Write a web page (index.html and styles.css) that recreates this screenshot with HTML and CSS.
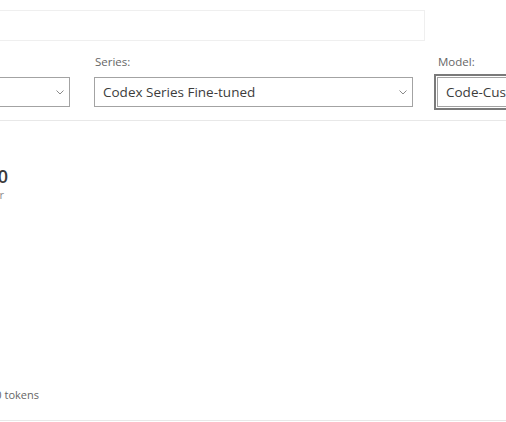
FILE: index.html
```html
<!DOCTYPE html>
<html lang="en">
<head>
<meta charset="utf-8">
<title>Pricing calculator</title>
<link rel="stylesheet" href="styles.css">
</head>
<body>
<div class="page">
  <div class="search"></div>
  <div class="filters">
    <div class="field">
      <div class="label">Region:</div>
      <div class="select"><span class="value">East US</span><svg class="chev" width="8" height="5" viewBox="0 0 8 5"><path d="M0.5 0.5 L4 4 L7.5 0.5" fill="none" stroke="#8a8a8a" stroke-width="1"/></svg></div>
    </div>
    <div class="field">
      <div class="label">Series:</div>
      <div class="select"><span class="value">Codex Series Fine-tuned</span><svg class="chev" width="8" height="5" viewBox="0 0 8 5"><path d="M0.5 0.5 L4 4 L7.5 0.5" fill="none" stroke="#8a8a8a" stroke-width="1"/></svg></div>
    </div>
    <div class="field">
      <div class="label">Model:</div>
      <div class="select focused"><span class="value">Code-Cushman-001</span><svg class="chev" width="8" height="5" viewBox="0 0 8 5"><path d="M0.5 0.5 L4 4 L7.5 0.5" fill="none" stroke="#8a8a8a" stroke-width="1"/></svg></div>
    </div>
  </div>
  <div class="results">
    <div class="summary">
      <div class="price">$0.00</div>
      <div class="unit">Per hour</div>
    </div>
    <div class="note">Up to 1,000 tokens</div>
  </div>
</div>
</body>
</html>
```

FILE: styles.css
```css
html, body {
  margin: 0;
  padding: 0;
  background: #ffffff;
}
body {
  width: 506px;
  height: 422px;
  overflow: hidden;
  font-family: "Open Sans", "Noto Sans", "DejaVu Sans", sans-serif;
  color: #333333;
}
.page {
  margin-left: -249px;
  width: 1200px;
}
.search {
  margin-top: 10px;
  width: 672px;
  height: 29px;
  border: 1px solid #efefef;
}
.filters {
  display: flex;
  gap: 24px;
  margin-top: 12px;
}
.field {
  width: 319px;
  flex: none;
}
.label {
  font-size: 11.5px;
  line-height: 17px;
  color: #666666;
  padding-left: 1px;
  margin-bottom: 7px;
}
.select {
  box-sizing: border-box;
  height: 30px;
  border: 1px solid #a3a3a3;
  display: flex;
  align-items: center;
  justify-content: space-between;
  padding: 0 5px 0 8px;
  background: #fff;
}
.select.focused {
  outline: 2px solid #7a7a7a;
  outline-offset: 1px;
}
.value {
  font-size: 13.5px;
  color: #3c3c3c;
  white-space: nowrap;
}
.chev {
  display: block;
  margin-top: 1px;
}
.results {
  margin-top: 13px;
  height: 299px;
  border-top: 1px solid #e8e8e8;
  border-bottom: 1px solid #e8e8e8;
  display: flex;
  flex-direction: column;
}
.summary {
  width: 257px;
  text-align: right;
  padding-top: 44px;
}
.price {
  font-size: 18px;
  line-height: 22px;
  font-weight: 600;
  color: #3a3a3a;
}
.unit {
  font-size: 11px;
  line-height: 16px;
  color: #8a8a8a;
  padding-right: 4px;
}
.note {
  margin-top: auto;
  margin-bottom: 17px;
  width: 285px;
  padding-left: 3px;
  text-align: right;
  font-size: 11px;
  line-height: 16px;
  color: #666666;
}
```
